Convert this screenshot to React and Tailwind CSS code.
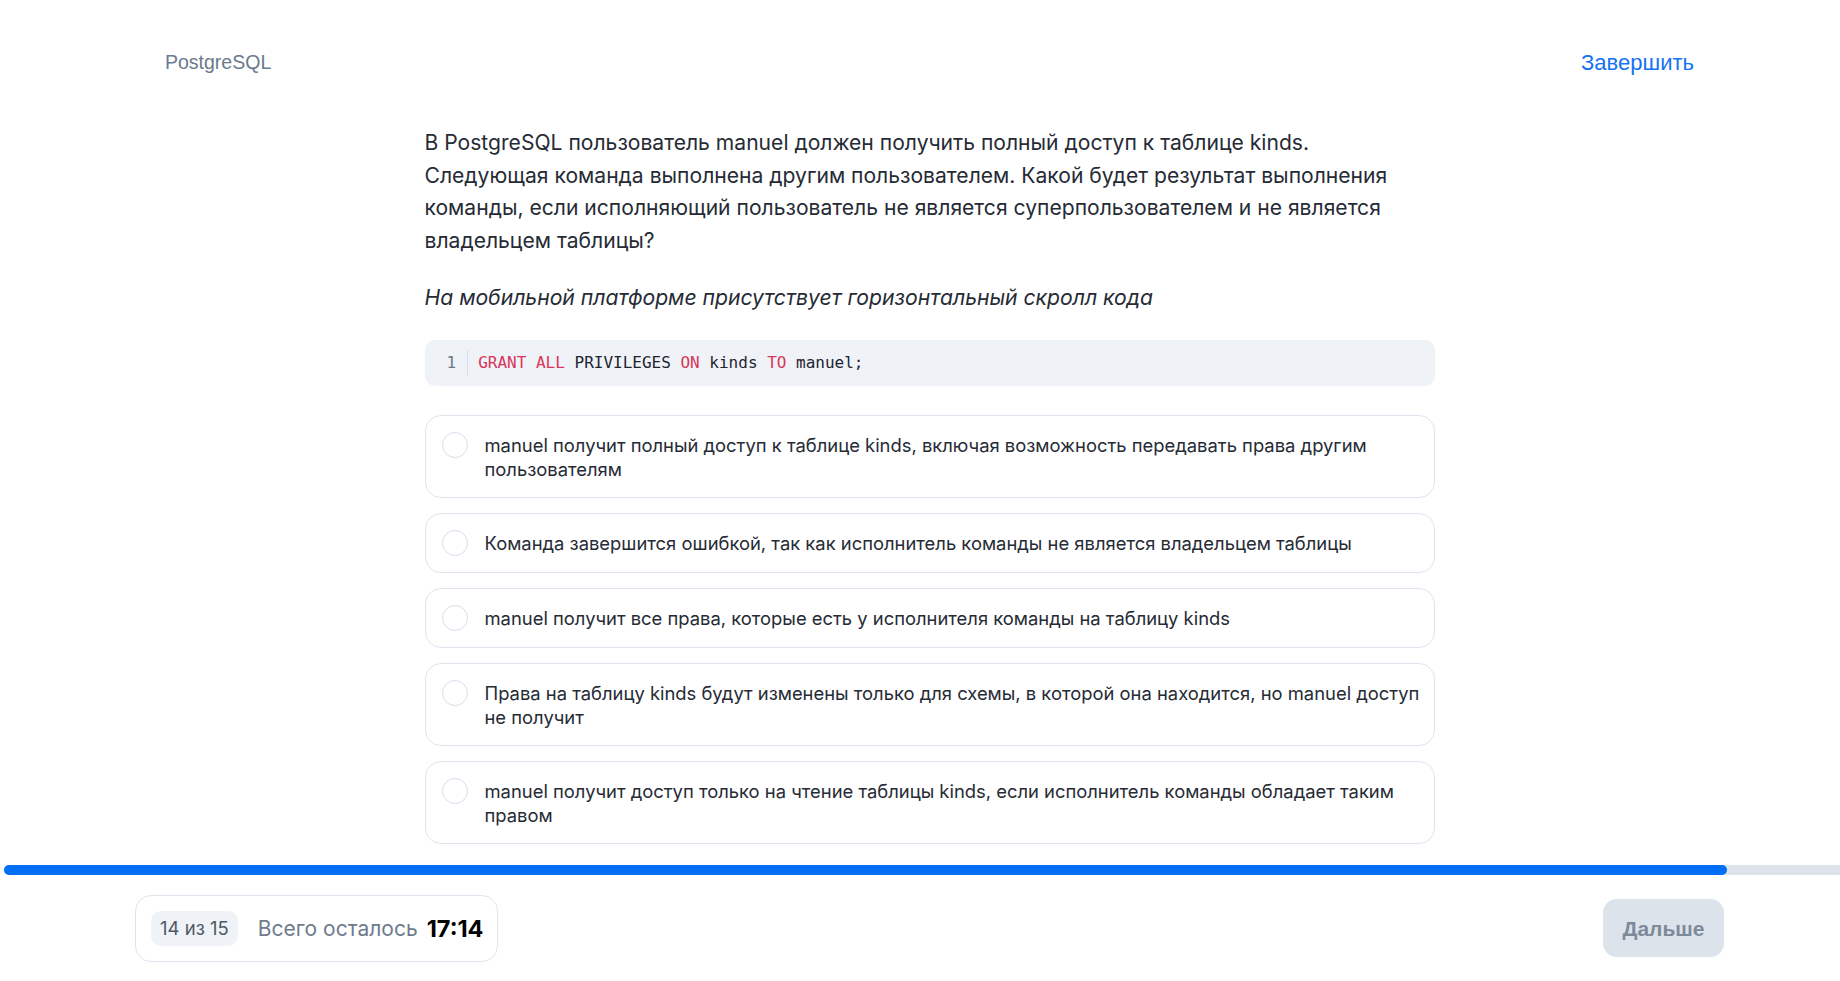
import React from 'react';

const answers = [
  'manuel получит полный доступ к таблице kinds, включая возможность передавать права другим пользователям',
  'Команда завершится ошибкой, так как исполнитель команды не является владельцем таблицы',
  'manuel получит все права, которые есть у исполнителя команды на таблицу kinds',
  'Права на таблицу kinds будут изменены только для схемы, в которой она находится, но manuel доступ не получит',
  'manuel получит доступ только на чтение таблицы kinds, если исполнитель команды обладает таким правом',
];

const kw = 'text-[#d9365a]';

const App = () => {
  const current = 14;
  const total = 15;

  return (
    <div className="h-screen flex flex-col bg-white overflow-hidden" style={{ fontFamily: 'Inter, "Noto Sans", sans-serif' }}>
      {/* header */}
      <div className="pl-[135px] pr-[116px]">
        <div className="flex justify-between px-[30px] pt-[48px] h-[124px] items-start">
          <span className="text-[19.5px] text-[#6a7a8e]" style={{ fontFamily: '"Liberation Sans", Arial, sans-serif' }}>PostgreSQL</span>
          <button className="mt-[2px] text-[22px] leading-[26px] text-[#1672f3]" style={{ fontFamily: '"Liberation Sans", Arial, sans-serif' }}>Завершить</button>
        </div>
      </div>

      {/* main */}
      <div className="flex-1 pl-[135px] pr-[116px] overflow-hidden">
        <div className="w-[1010px] mx-auto text-[#262b35]">
          <p className="max-w-[995px] text-[21.1px] leading-[32.5px] mt-[3px]">
            В PostgreSQL пользователь manuel должен получить полный доступ к таблице kinds. Следующая команда выполнена другим пользователем. Какой будет результат выполнения команды, если исполняющий пользователь не является суперпользователем и не является владельцем таблицы?
          </p>
          <p className="text-[21.15px] leading-[32.5px] italic mt-[25px]">
            На мобильной платформе присутствует горизонтальный скролл кода
          </p>

          <div className="mt-[25px] h-[46px] rounded-[10px] bg-[#eff2f7] flex items-center pl-[22px] text-[16px]" style={{ fontFamily: '"DejaVu Sans Mono", "Liberation Mono", monospace' }}>
            <span className="text-[#6b7785] pr-[11px] border-r border-[#d8dee7] leading-[26px]">1</span>
            <span className="pl-[10px] text-[#1f2430]">
              <span className={kw}>GRANT</span> <span className={kw}>ALL</span> PRIVILEGES <span className={kw}>ON</span> kinds <span className={kw}>TO</span> manuel;
            </span>
          </div>

          <div className="mt-[29px] flex flex-col gap-[15px]">
            {answers.map((a, i) => (
              <label key={i} className="flex items-start gap-[17px] border border-[#dfe5ee] rounded-[16px] py-4 pl-4 pr-[10px] cursor-pointer">
                <span className="w-[26px] h-[26px] shrink-0 rounded-full border-[1.5px] border-[#d6dee9] bg-white" />
                <span className="text-[18.4px] leading-[24px] pt-[1px]">{a}</span>
              </label>
            ))}
          </div>
        </div>
      </div>

      {/* progress */}
      <div className="h-[10px] ml-[4px] rounded-l-full bg-[#dde3ea] flex">
        <div className="h-full rounded-full bg-[#006ef5]" style={{ width: `${(current / total) * 100 + 0.5}%` }} />
      </div>

      {/* footer */}
      <div className="pl-[135px] pr-[116px] pt-[20px] pb-[19px] flex items-center justify-between">
        <div className="flex items-center border border-[#dfe5ee] rounded-[16px] py-[15px] pl-[15px] pr-[13px]">
          <span className="h-[35px] px-[9px] rounded-[10px] bg-[#eff2f7] text-[#4f5966] text-[18.5px] flex items-center">
            {current} из {total}
          </span>
          <span className="ml-[20px] text-[21px] text-[#6e7b8c]">Всего осталось</span>
          <span className="ml-[9px] text-[23.5px] font-bold text-black">17:14</span>
        </div>
        <button className="w-[121px] h-[58px] rounded-[14px] bg-[#dde3ea] text-[#7d8a9a] text-[21px] font-bold" style={{ fontFamily: '"Liberation Sans", Arial, sans-serif' }}>
          Дальше
        </button>
      </div>
    </div>
  );
};

export default App;
